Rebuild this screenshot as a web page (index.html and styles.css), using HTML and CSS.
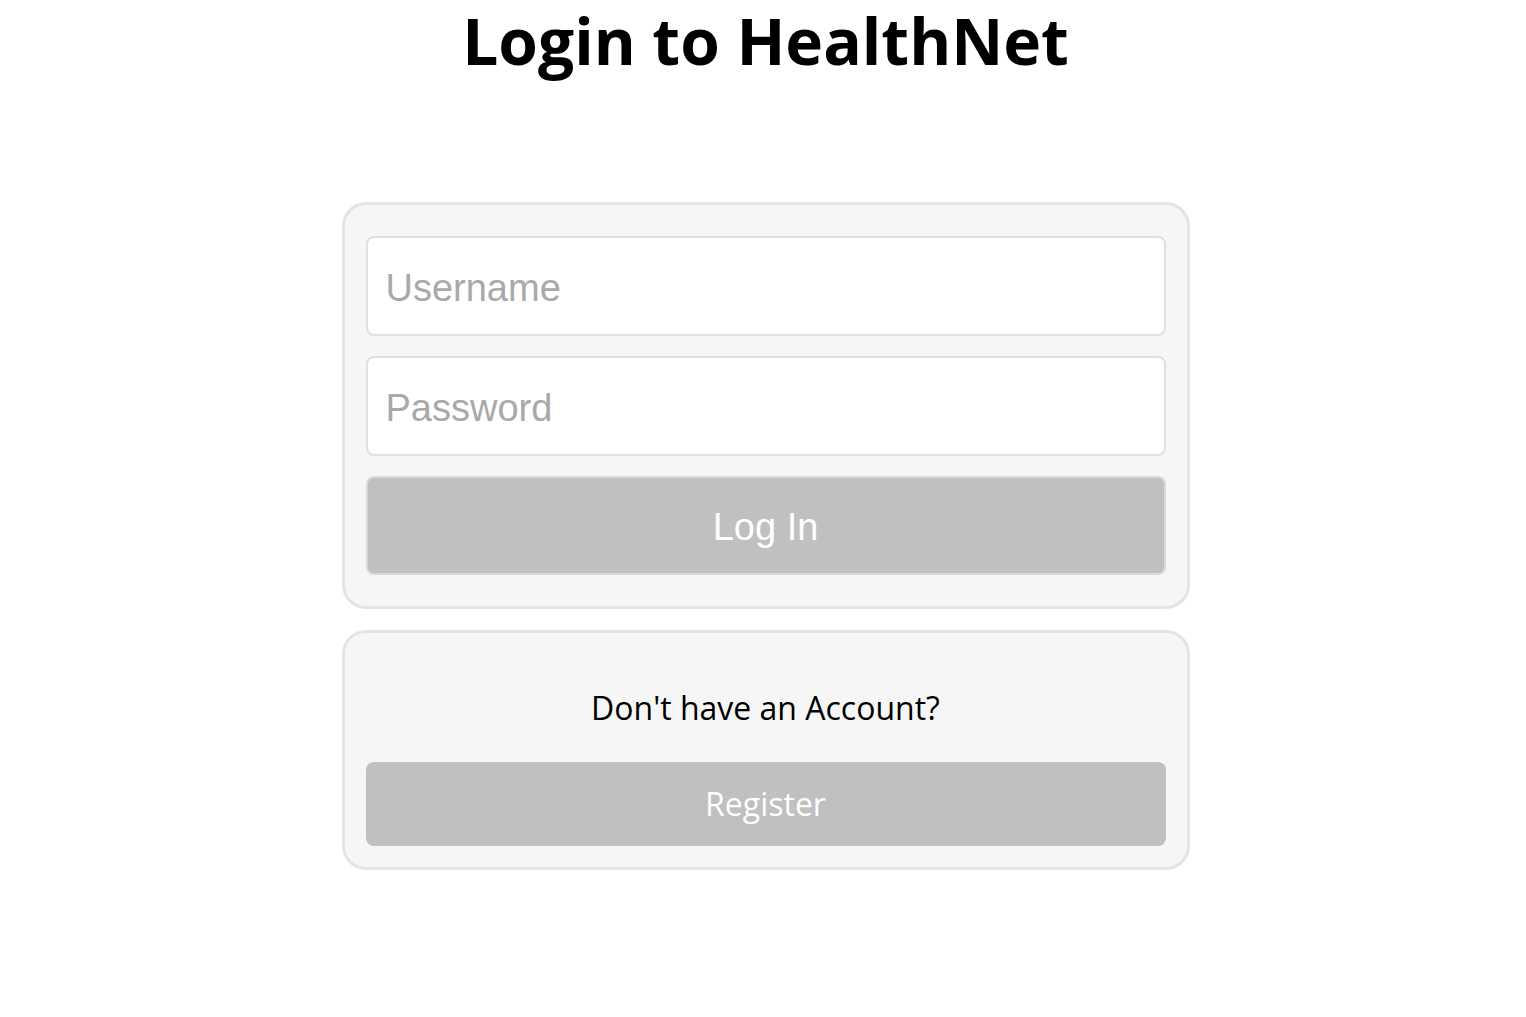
FILE: index.html
```html
<!DOCTYPE html>
<html lang="en">
<head>
<meta charset="utf-8">
<title>Login to HealthNet</title>
<link rel="stylesheet" href="styles.css">
</head>
<body>
<main class="page">
  <h1 class="title">Login to HealthNet</h1>
  <form class="card login-card">
    <input class="field" type="text" placeholder="Username">
    <input class="field" type="password" placeholder="Password">
    <button class="login-btn" type="button">Log In</button>
  </form>
  <section class="card register-card">
    <p class="register-text">Don't have an Account?</p>
    <button class="register-btn" type="button">Register</button>
  </section>
</main>
</body>
</html>
```
FILE: styles.css
```css
html, body {
  margin: 0;
  background: #ffffff;
}

body {
  padding-left: 5px;
  font-family: "Open Sans", "Liberation Sans", sans-serif;
  color: #000;
}

.page {
  display: flex;
  flex-direction: column;
  align-items: center;
}

.title {
  margin: 0;
  padding-top: 1px;
  font-size: 64px;
  font-weight: 700;
  line-height: 80px;
  text-align: center;
}

.card {
  box-sizing: border-box;
  width: 848px;
  background: #f6f6f6;
  border: 3px solid #e4e4e4;
  border-radius: 24px;
  padding: 21px;
  display: flex;
  flex-direction: column;
}

.login-card {
  margin-top: 121px;
}

.register-card {
  margin-top: 21px;
  align-items: stretch;
}

.field,
.login-btn {
  box-sizing: border-box;
  width: 800px;
  height: 100px;
  margin: 10px 0;
  border-radius: 8px;
  font-family: "Liberation Sans", Arial, sans-serif;
  font-size: 38px;
}

.field {
  background: #ffffff;
  border: 2px solid #e0e0e0;
  padding: 4px 18px 0;
  color: #333;
  outline: none;
}

.field::placeholder {
  color: #a9a9a9;
}

.login-btn {
  height: 99px;
  padding-top: 4px;
  background: #c0c0c0;
  border: 2px solid #d9d9d9;
  color: #ffffff;
  cursor: pointer;
}

.register-text {
  margin: 32px 0;
  font-size: 32px;
  line-height: 43.6px;
  text-align: center;
}

.register-btn {
  box-sizing: border-box;
  width: 800px;
  height: 84px;
  border: none;
  border-radius: 8px;
  background: #c0c0c0;
  color: #ffffff;
  font-family: "Open Sans", sans-serif;
  font-size: 32px;
  font-weight: 500;
  cursor: pointer;
}
```
